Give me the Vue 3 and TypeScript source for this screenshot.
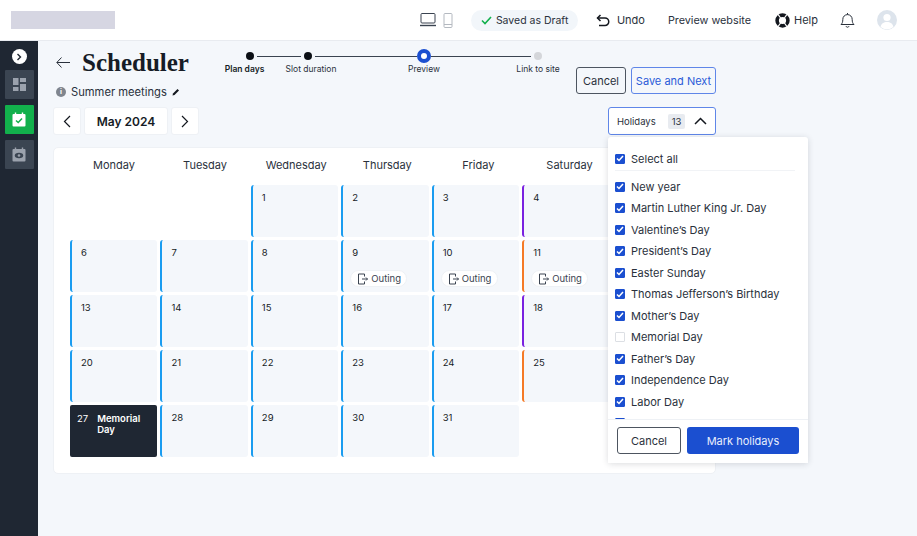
<script setup lang="ts">
import { ref } from 'vue'

interface DayCell {
  num: number
  color: string
  outing: boolean
}

const weekdays = ['Monday', 'Tuesday', 'Wednesday', 'Thursday', 'Friday', 'Saturday']

const holidays = ref([
  { name: 'New year', on: true },
  { name: 'Martin Luther King Jr. Day', on: true },
  { name: 'Valentine’s Day', on: true },
  { name: 'President’s Day', on: true },
  { name: 'Easter Sunday', on: true },
  { name: 'Thomas Jefferson’s Birthday', on: true },
  { name: 'Mother’s Day', on: true },
  { name: 'Memorial Day', on: false },
  { name: 'Father’s Day', on: true },
  { name: 'Independence Day', on: true },
  { name: 'Labor Day', on: true },
  { name: '', on: true },
])

const colorFor = (n: number) => {
  if (n === 4 || n === 18) return 'purple'
  if (n === 11 || n === 25) return 'orange'
  return 'blue'
}

// sundays sit under the open holidays menu, so they stay as empty slots
const isSunday = (n: number) => n % 7 === 5

const days: DayCell[] = []
for (let n = 1; n <= 31; n++) {
  days.push({ num: n, color: colorFor(n), outing: n >= 9 && n <= 11 })
}
</script>

<template>
  <div class="app">
    <header class="topbar">
      <div class="logo"></div>
      <div class="top-actions">
        <div class="devices">
          <svg width="18" height="14" viewBox="0 0 18 14" fill="none" stroke="#3a4350" stroke-width="1">
            <rect x="2" y="0.5" width="14" height="9.5" rx="1" />
            <path d="M1 12.5h16" stroke-width="1.4" />
          </svg>
          <svg width="10" height="15" viewBox="0 0 10 15" fill="none" stroke="#b4b9c0" stroke-width="1">
            <rect x="1" y="0.5" width="8" height="14" rx="1" />
            <path d="M1 11.5h8" />
          </svg>
        </div>
        <div class="saved">
          <svg width="11" height="9" viewBox="0 0 11 9" fill="none" stroke="#12b04c" stroke-width="1.6">
            <path d="M1 4.5 4 7.5 10 1" />
          </svg>
          <span>Saved as Draft</span>
        </div>
        <div class="undo">
          <svg width="14" height="13" viewBox="0 0 14 13" fill="none" stroke="#14181f" stroke-width="1.5">
            <path d="M4.5 1 1.5 4l3 3" />
            <path d="M1.5 4H9a3.6 3.6 0 0 1 0 7.5H3" />
          </svg>
          <span>Undo</span>
        </div>
        <span class="preview-link">Preview website</span>
        <div class="help">
          <svg width="15" height="15" viewBox="0 0 15 15">
            <circle cx="7.5" cy="7.5" r="5.4" fill="none" stroke="#14181f" stroke-width="3.6" />
            <path d="M3.2 1.7 5.6 5M11.8 1.7 9.4 5M3.2 13.3 5.6 10M11.8 13.3 9.4 10" stroke="#fff" stroke-width="1.2" />
          </svg>
          <span>Help</span>
        </div>
        <svg class="bell" width="15" height="16" viewBox="0 0 15 16" fill="none" stroke="#2a313c" stroke-width="1">
          <path d="M1 12.5c1.3-1.2 1.8-2.5 1.8-5A4.7 4.7 0 0 1 7.5 2.6a4.7 4.7 0 0 1 4.7 4.9c0 2.5.5 3.8 1.8 5z" />
          <path d="M7.5 1v1.6M6 14.2a1.6 1.6 0 0 0 3 0" />
        </svg>
        <div class="avatar">
          <svg width="20" height="20" viewBox="0 0 20 20" fill="#fff">
            <circle cx="10" cy="7.5" r="3.6" />
            <path d="M3.6 17c.6-3.6 3.2-5 6.4-5s5.8 1.4 6.4 5a9.5 9.5 0 0 1-12.8 0z" />
          </svg>
        </div>
      </div>
    </header>

    <div class="body">
      <aside class="sidebar">
        <div class="expand">
          <svg width="6" height="8" viewBox="0 0 6 8" fill="none" stroke="#1f2733" stroke-width="1.4">
            <path d="M1.5 1 4.5 4 1.5 7" />
          </svg>
        </div>
        <div class="side-item">
          <svg width="13" height="13" viewBox="0 0 13 13" fill="#9ba2ad">
            <rect x="0" y="0" width="5.5" height="7" />
            <rect x="7" y="0" width="6" height="4" />
            <rect x="7" y="6" width="6" height="7" />
            <rect x="0" y="9" width="5.5" height="4" />
          </svg>
        </div>
        <div class="side-item active">
          <svg width="14" height="15" viewBox="0 0 14 15">
            <rect x="0.5" y="2" width="13" height="12.5" rx="1" fill="#fff" />
            <path d="M3.5 0.5v3M10.5 0.5v3" stroke="#fff" stroke-width="1.4" />
            <path d="M4 8.5 6.2 10.5 10 6.5" fill="none" stroke="#12b04c" stroke-width="1.5" />
          </svg>
        </div>
        <div class="side-item">
          <svg width="14" height="15" viewBox="0 0 14 15">
            <rect x="0.5" y="2" width="13" height="12.5" rx="1" fill="#9ba2ad" />
            <path d="M3.5 0.5v3M10.5 0.5v3" stroke="#9ba2ad" stroke-width="1.4" />
            <ellipse cx="7" cy="8.5" rx="4.2" ry="2.8" fill="#3b4552" />
            <circle cx="7" cy="8.5" r="1.3" fill="#9ba2ad" />
          </svg>
        </div>
      </aside>

      <main class="main">
        <div class="head">
          <div class="head-left">
            <div class="title-row">
              <svg width="14" height="11" viewBox="0 0 14 11" fill="none" stroke="#2a313c" stroke-width="1">
                <path d="M5.5 0.5.8 5.5l4.7 5M1 5.5h13" />
              </svg>
              <h1>Scheduler</h1>
            </div>
            <div class="meeting">
              <span class="info">i</span>
              <span>Summer meetings</span>
              <svg width="8" height="8" viewBox="0 0 8 8" fill="#14181f">
                <path d="M0.5 7.5 1 5.5 5.5 1 7 2.5 2.5 7z" />
              </svg>
            </div>
            <div class="month-nav">
              <button class="nav-btn">
                <svg width="8" height="13" viewBox="0 0 8 13" fill="none" stroke="#14181f" stroke-width="1.2">
                  <path d="M7 1 1.5 6.5 7 12" />
                </svg>
              </button>
              <div class="month">May 2024</div>
              <button class="nav-btn">
                <svg width="8" height="13" viewBox="0 0 8 13" fill="none" stroke="#14181f" stroke-width="1.2">
                  <path d="M1 1l5.5 5.5L1 12" />
                </svg>
              </button>
            </div>
          </div>

          <div class="head-right">
            <div class="stepper">
              <div class="step done"><i class="dot"></i><b>Plan days</b></div>
              <span class="line l1"></span>
              <div class="step done"><i class="dot"></i><span class="slot">Slot duration</span></div>
              <span class="line l2"></span>
              <div class="step current"><i class="dot"></i><span>Preview</span></div>
              <span class="line l3"></span>
              <div class="step todo"><i class="dot"></i><span>Link to site</span></div>
            </div>
            <div class="head-buttons">
              <button class="btn-cancel">Cancel</button>
              <button class="btn-save">Save and Next</button>
            </div>
            <div class="holiday-wrap">
              <button class="holiday-toggle">
                <span>Holidays</span>
                <em>13</em>
                <svg width="13" height="8" viewBox="0 0 13 8" fill="none" stroke="#14181f" stroke-width="1.5">
                  <path d="M1 7 6.5 1.5 12 7" />
                </svg>
              </button>
              <div class="dropdown">
                <div class="select-all">
                  <span class="check on">
                    <svg width="8" height="7" viewBox="0 0 8 7" fill="none" stroke="#fff" stroke-width="1.5"><path d="M1 3.5 3 5.5 7 1" /></svg>
                  </span>
                  <span>Select all</span>
                </div>
                <ul class="holiday-list">
                  <li v-for="(h, i) in holidays" :key="i">
                    <span class="check" :class="{ on: h.on }">
                      <svg v-if="h.on" width="8" height="7" viewBox="0 0 8 7" fill="none" stroke="#fff" stroke-width="1.5"><path d="M1 3.5 3 5.5 7 1" /></svg>
                    </span>
                    <span>{{ h.name }}</span>
                  </li>
                </ul>
                <div class="dropdown-foot">
                  <button class="foot-cancel">Cancel</button>
                  <button class="foot-mark">Mark holidays</button>
                </div>
              </div>
            </div>
          </div>
        </div>

        <section class="calendar">
          <div class="weekdays">
            <span v-for="d in weekdays" :key="d">{{ d }}</span>
          </div>
          <div class="grid">
            <div></div>
            <div></div>
            <template v-for="d in days" :key="d.num">
              <div v-if="isSunday(d.num)"></div>
              <div v-else-if="d.num === 27" class="cell dark">
                <span class="num">27</span>
                <b>Memorial Day</b>
              </div>
              <div v-else class="cell" :class="d.color">
                <span class="num">{{ d.num }}</span>
                <span v-if="d.outing" class="outing">
                  <svg width="11" height="12" viewBox="0 0 11 12" fill="none" stroke="#3a4350" stroke-width="1">
                    <path d="M7.5 3.5V1H1.5v10h6V8.5M5 6h5.500M9 4.500 10.500 6 9 7.500" />
                  </svg>
                  Outing
                </span>
              </div>
            </template>
          </div>
        </section>
      </main>
    </div>
  </div>
</template>

<style>
html,
body {
  margin: 0;
  background: #f4f7fb;
}
</style>

<style scoped>
.app {
  width: 917px;
  height: 536px;
  overflow: hidden;
  display: flex;
  flex-direction: column;
  font-family: Inter, "Open Sans", sans-serif;
  color: #2a313c;
  background: #f4f7fb;
}

.topbar {
  height: 41px;
  box-sizing: border-box;
  background: #fff;
  border-bottom: 1px solid #e8ebf0;
  display: flex;
  align-items: center;
  justify-content: space-between;
  padding: 0 20px 0 11px;
  flex-shrink: 0;
}

.logo {
  width: 104px;
  height: 18px;
  background: #d6d6e2;
}

.top-actions {
  display: flex;
  align-items: center;
  font-size: 11px;
  color: #2a313c;
}

.devices {
  display: flex;
  align-items: center;
  gap: 6px;
  margin-right: 18px;
}

.saved {
  height: 21px;
  width: 107px;
  box-sizing: border-box;
  padding-left: 10px;
  border-radius: 11px;
  background: #f2f6fa;
  display: flex;
  align-items: center;
  gap: 4px;
  margin-right: 18px;
  font-size: 10.5px;
}

.undo {
  display: flex;
  align-items: center;
  gap: 7px;
  margin-right: 23px;
}

.preview-link {
  font-size: 10.8px;
  margin-right: 24px;
}

.help {
  display: flex;
  align-items: center;
  gap: 4px;
  margin-right: 22px;
}

.bell {
  margin-right: 22px;
}

.avatar {
  width: 20px;
  height: 20px;
  border-radius: 50%;
  background: #dde4ec;
  overflow: hidden;
}

.body {
  flex: 1;
  display: flex;
  min-height: 0;
}

.sidebar {
  width: 38px;
  background: #1f2733;
  display: flex;
  flex-direction: column;
  align-items: center;
  padding-top: 8px;
  box-sizing: border-box;
  flex-shrink: 0;
}

.expand {
  width: 15px;
  height: 15px;
  border-radius: 50%;
  background: #fff;
  display: flex;
  align-items: center;
  justify-content: center;
  margin-bottom: 6px;
}

.side-item {
  width: 29px;
  height: 29px;
  background: #3b4552;
  border-radius: 1px;
  display: flex;
  align-items: center;
  justify-content: center;
  margin-bottom: 6px;
}

.side-item.active {
  background: #12b04c;
}

.main {
  flex: 1;
  padding: 0 0 0 15px;
  min-width: 0;
}

.head {
  display: flex;
  height: 94px;
}

.head-left {
  width: 172px;
}

.title-row {
  display: flex;
  align-items: center;
  height: 43px;
  padding-left: 3px;
  gap: 12px;
}

h1 {
  margin: 0;
  font-family: "Liberation Serif", serif;
  font-weight: 700;
  font-size: 25px;
  color: #161c26;
}

.meeting {
  display: flex;
  align-items: center;
  gap: 5px;
  font-size: 11.2px;
  height: 16px;
  padding-left: 3px;
}

.info {
  width: 10px;
  height: 10px;
  border-radius: 50%;
  background: #7f858e;
  color: #fff;
  font-size: 7px;
  font-weight: 700;
  text-align: center;
  line-height: 10px;
}

.month-nav {
  display: flex;
  gap: 3px;
  margin-top: 7px;
}

.nav-btn,
.month {
  height: 28px;
  background: #fff;
  border: 1px solid #eef1f5;
  border-radius: 3px;
  box-sizing: border-box;
  display: flex;
  align-items: center;
  justify-content: center;
  padding: 0;
}

.nav-btn {
  width: 28px;
}

.month {
  width: 84px;
  font-size: 12px;
  font-weight: 600;
  color: #161c26;
}

.head-right {
  flex: 1;
}

.stepper {
  display: flex;
  align-items: flex-start;
  padding: 8px 0 0 18px;
}

.step {
  width: 14px;
  height: 14px;
  display: flex;
  flex-direction: column;
  align-items: center;
  font-size: 8.5px;
  white-space: nowrap;
  color: #2a313c;
}

.step .dot {
  display: block;
  width: 8px;
  height: 8px;
  border-radius: 50%;
  background: #0b0f15;
  margin: 3px 0 4px;
  flex-shrink: 0;
}

.step.current .dot {
  width: 14px;
  height: 14px;
  box-sizing: border-box;
  border: 4px solid #1b4fd0;
  background: #fff;
  margin: 0 0 1px;
}

.step.todo .dot {
  background: #d4d6da;
}

.step b {
  font-weight: 600;
  color: #161c26;
  margin-right: 11px;
}

.step .slot {
  margin-left: 6px;
}

.line {
  height: 1px;
  background: #3a4350;
  margin-top: 7px;
}

.l1 {
  width: 44px;
}

.l2 {
  width: 102px;
}

.l3 {
  width: 100px;
}

.head-buttons {
  display: flex;
  gap: 5px;
  justify-content: flex-end;
  margin: 4px 201px 0 0;
}

.btn-cancel,
.btn-save {
  height: 27px;
  box-sizing: border-box;
  border-radius: 3px;
  background: transparent;
  font-family: inherit;
  font-size: 11px;
  padding: 0;
}

.btn-cancel {
  width: 50px;
  border: 1px solid #4d5560;
  color: #2a313c;
}

.btn-save {
  width: 85px;
  border: 1px solid #5f86e8;
  color: #2a5bd8;
}

.holiday-wrap {
  position: relative;
  width: 108px;
  margin: 13px 0 0 383px;
}

.holiday-toggle {
  width: 108px;
  height: 28px;
  box-sizing: border-box;
  background: #fff;
  border: 1px solid #5f86e8;
  border-radius: 3px;
  display: flex;
  align-items: center;
  font-family: inherit;
  font-size: 9.5px;
  color: #2a313c;
  padding: 0 8px;
}

.holiday-toggle em {
  font-style: normal;
  background: #e8ebf0;
  border-radius: 2px;
  padding: 2px 4px;
  margin: 0 auto 0 12px;
}

.dropdown {
  position: absolute;
  left: 0;
  top: 30px;
  width: 200px;
  height: 326px;
  background: #fff;
  border-radius: 3px;
  box-shadow: 0 1px 6px rgba(31, 39, 51, 0.16);
  display: flex;
  flex-direction: column;
  z-index: 2;
  font-size: 11px;
}

.select-all {
  display: flex;
  align-items: center;
  gap: 6px;
  height: 34px;
  margin: 0 13px 0 7px;
  padding-top: 10px;
  box-sizing: border-box;
  border-bottom: 1px solid #f1f3f6;
  flex-shrink: 0;
}

.holiday-list {
  list-style: none;
  margin: 0;
  padding: 5px 0 0 7px;
  flex: 1;
  overflow: hidden;
}

.holiday-list li {
  height: 21.5px;
  display: flex;
  align-items: center;
  gap: 6px;
}

.check {
  width: 10px;
  height: 10px;
  box-sizing: border-box;
  border: 1px solid #dcdfe4;
  border-radius: 1px;
  background: #fff;
  display: flex;
  align-items: center;
  justify-content: center;
  flex-shrink: 0;
}

.check.on {
  background: #1b4fd0;
  border-color: #1b4fd0;
}

.dropdown-foot {
  height: 44px;
  flex-shrink: 0;
  box-sizing: border-box;
  border-top: 1px solid #eef1f5;
  background: #fff;
  display: flex;
  align-items: center;
  gap: 6px;
  padding: 0 9px 2px;
}

.foot-cancel,
.foot-mark {
  height: 27px;
  box-sizing: border-box;
  border-radius: 3px;
  font-family: inherit;
  font-size: 11px;
  padding: 0;
}

.foot-cancel {
  width: 64px;
  background: #fff;
  border: 1px solid #4d5560;
  color: #2a313c;
}

.foot-mark {
  width: 112px;
  background: #1b4fd0;
  border: 0;
  color: #e8eefc;
}

.calendar {
  width: 663px;
  height: 327px;
  box-sizing: border-box;
  margin-top: 12px;
  background: #fff;
  border: 1px solid #eef1f5;
  border-radius: 5px;
  padding: 0 15px 0 16px;
}

.weekdays {
  display: grid;
  grid-template-columns: repeat(7, 88px);
  column-gap: 3.1px;
  height: 37px;
  box-sizing: border-box;
  padding-bottom: 3px;
  align-items: center;
  text-align: center;
  font-size: 11px;
  color: #2a313c;
}

.grid {
  display: grid;
  grid-template-columns: repeat(7, 1fr);
  grid-auto-rows: 52px;
  gap: 3px;
}

.cell {
  background: #f4f7fb;
  border-left: 2px solid #1a9cf0;
  border-radius: 3px;
  box-sizing: border-box;
  padding: 7px 9px;
  font-size: 9.5px;
  color: #161c26;
  display: flex;
  flex-direction: column;
  align-items: flex-start;
  min-width: 0;
}

.cell.purple {
  border-left-color: #7a22e0;
}

.cell.orange {
  border-left-color: #f57a26;
}

.cell.dark {
  flex-direction: row;
  gap: 9px;
  background: #1f2733;
  border: 0;
  border-radius: 2px;
  color: #fff;
  padding: 8px 7px;
}

.cell.dark b {
  font-weight: 600;
  line-height: 11px;
}

.num {
  line-height: 12px;
}

.outing {
  margin-top: 11px;
  margin-left: -2px;
  height: 17px;
  width: 57px;
  box-sizing: border-box;
  padding-left: 6px;
  border: 1px solid #eef1f5;
  border-radius: 9px;
  background: #fff;
  display: flex;
  align-items: center;
  gap: 3px;
  color: #3a4350;
  flex-shrink: 0;
}
</style>
